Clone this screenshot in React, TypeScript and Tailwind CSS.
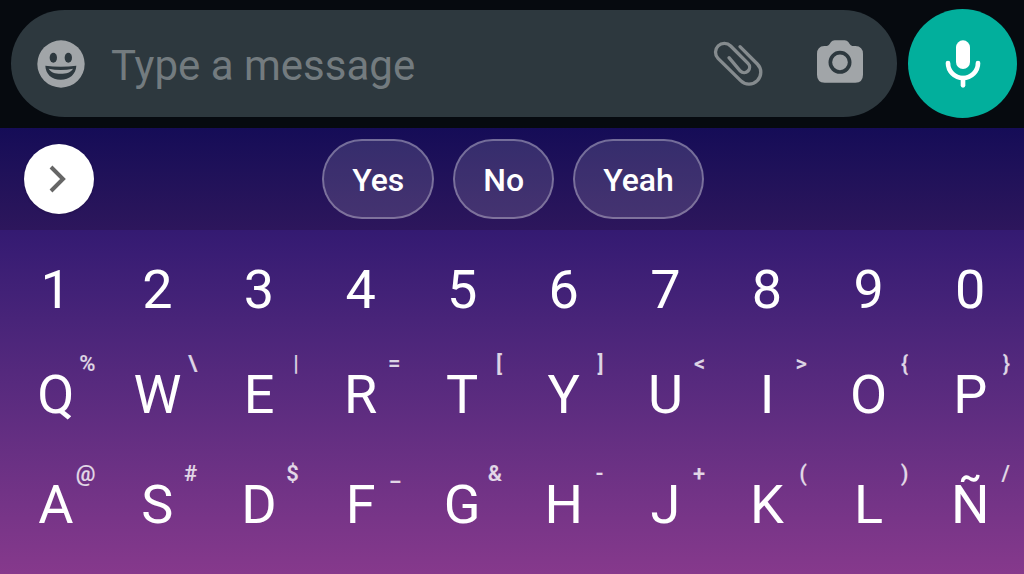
type KeyDef = { label: string; hint?: string };

const digits: KeyDef[] = "1234567890".split("").map((label) => ({ label }));

const topRow: KeyDef[] = [
    { label: "Q", hint: "%" },
    { label: "W", hint: "\\" },
    { label: "E", hint: "|" },
    { label: "R", hint: "=" },
    { label: "T", hint: "[" },
    { label: "Y", hint: "]" },
    { label: "U", hint: "<" },
    { label: "I", hint: ">" },
    { label: "O", hint: "{" },
    { label: "P", hint: "}" },
];

const homeRow: KeyDef[] = [
    { label: "A", hint: "@" },
    { label: "S", hint: "#" },
    { label: "D", hint: "$" },
    { label: "F", hint: "_" },
    { label: "G", hint: "&" },
    { label: "H", hint: "-" },
    { label: "J", hint: "+" },
    { label: "K", hint: "(" },
    { label: "L", hint: ")" },
    { label: "Ñ", hint: "/" },
];

const suggestions = ["Yes", "No", "Yeah"];

function EmojiIcon() {
    return (
        <svg viewBox="0 0 144 144" className="size-12" aria-hidden="true">
            <circle cx="72" cy="72" r="71" fill="#a1a5a8" />
            <ellipse cx="49" cy="53" rx="11" ry="15" fill="#2d383e" />
            <ellipse cx="94" cy="53" rx="11" ry="15" fill="#2d383e" />
            <path d="M25 77Q71 83 118 77C117 102 98 119 71 119S26 102 25 77Z" fill="#2d383e" />
            <path d="M35 86Q71 94 108 86C102 97 88 101 71 101S41 97 35 86Z" fill="#a1a5a8" />
        </svg>
    );
}

function ClipIcon() {
    return (
        <svg viewBox="0 0 150 144" className="h-12 w-[50px]" fill="none" stroke="#858b8e" strokeWidth="10" strokeLinecap="round" aria-hidden="true">
            <path d="M81 20L133 72A35 35 0 0 1 83 122L15 55A26 26 0 0 1 53 18L105 70A16 16 0 0 1 82 93L48 53" />
        </svg>
    );
}

function CameraIcon() {
    return (
        <svg viewBox="0 0 144 144" className="size-12" aria-hidden="true">
            <path
                d="M3 42Q3 19 25 18H33Q38 17 41 12L45 6Q49 1 56 1H86Q93 1 97 6L101 12Q104 17 109 18H118Q141 19 141 42V104Q141 127 118 128H26Q3 127 3 104Z"
                fill="#a1a5a8"
            />
            <circle cx="72" cy="67" r="29" fill="none" stroke="#2d383e" strokeWidth="11" />
        </svg>
    );
}

function MicIcon() {
    return (
        <svg viewBox="0 0 108 144" className="h-12 w-9" fill="none" stroke="#fff" strokeWidth="14" strokeLinecap="round" aria-hidden="true">
            <rect x="33" y="1" width="42" height="86" rx="21" fill="#fff" stroke="none" />
            <path d="M9 69A45 45 0 0 0 99 69" />
            <path d="M54 114V136" />
        </svg>
    );
}

function KeyRow({ keys }: { keys: KeyDef[] }) {
    return (
        <div className="grid grid-cols-10">
            {keys.map((key) => (
                <button
                    key={key.label}
                    type="button"
                    className={
                        key.hint
                            ? "relative flex h-[110px] items-center justify-center text-[54px] leading-[54px]"
                            : "relative flex h-[100px] items-center justify-center text-[54px] leading-[54px]"
                    }
                >
                    {key.label}
                    {key.hint && (
                        <span className="absolute top-3 right-[11px] text-[22px] leading-6 font-semibold text-white/80">{key.hint}</span>
                    )}
                </button>
            ))}
        </div>
    );
}

export default function App() {
    return (
        <div className="flex min-h-screen flex-col bg-[#060a0f] font-[Roboto,sans-serif] text-white">
            {/* Message bar */}
            <div className="flex items-center gap-[11px] pt-[9px] pr-[7px] pb-[10px] pl-[11px]">
                <div className="flex h-[107px] min-w-0 flex-1 items-center rounded-full bg-[#2d383e] pr-[33px] pl-[26px]">
                    <button type="button" aria-label="Emoji" className="shrink-0">
                        <EmojiIcon />
                    </button>
                    <input
                        type="text"
                        aria-label="Message"
                        placeholder="Type a message"
                        className="ml-[26px] min-w-0 flex-1 bg-transparent pt-1 text-[42px] leading-[50px] outline-none placeholder:text-[#737b7f]"
                    />
                    <button type="button" aria-label="Attach" className="shrink-0">
                        <ClipIcon />
                    </button>
                    <button type="button" aria-label="Camera" className="ml-[53px] shrink-0">
                        <CameraIcon />
                    </button>
                </div>
                <button
                    type="button"
                    aria-label="Record voice message"
                    className="flex size-[109px] shrink-0 items-center justify-center rounded-full bg-[#02af9c]"
                >
                    <MicIcon />
                </button>
            </div>

            {/* Suggestions */}
            <div className="grid grid-cols-[1fr_auto_1fr] items-center bg-linear-to-b from-[#150c57] to-[#2d165c] py-[11px] pr-[22px] pl-6">
                <button
                    type="button"
                    aria-label="Expand toolbar"
                    className="flex size-[70px] items-center justify-center rounded-full bg-white shadow-sm"
                >
                    <svg viewBox="0 0 24 32" className="h-8 w-6" fill="none" stroke="#666" strokeWidth="4" aria-hidden="true">
                        <path d="M4 4L16 16L4 28" />
                    </svg>
                </button>
                <div className="flex gap-[19px]">
                    {suggestions.map((text) => (
                        <button
                            key={text}
                            type="button"
                            className="h-20 rounded-full border-2 border-white/40 bg-white/13 bg-clip-padding px-7 pt-[2px] text-[32px] leading-10 font-medium"
                        >
                            {text}
                        </button>
                    ))}
                </div>
            </div>

            {/* Keys */}
            <div className="flex-1 bg-linear-to-b from-[#341a72] to-[#86398c] pt-[10px] pr-[3px] pb-[13px] pl-[5px]">
                <KeyRow keys={digits} />
                <KeyRow keys={topRow} />
                <KeyRow keys={homeRow} />
            </div>
        </div>
    );
}
